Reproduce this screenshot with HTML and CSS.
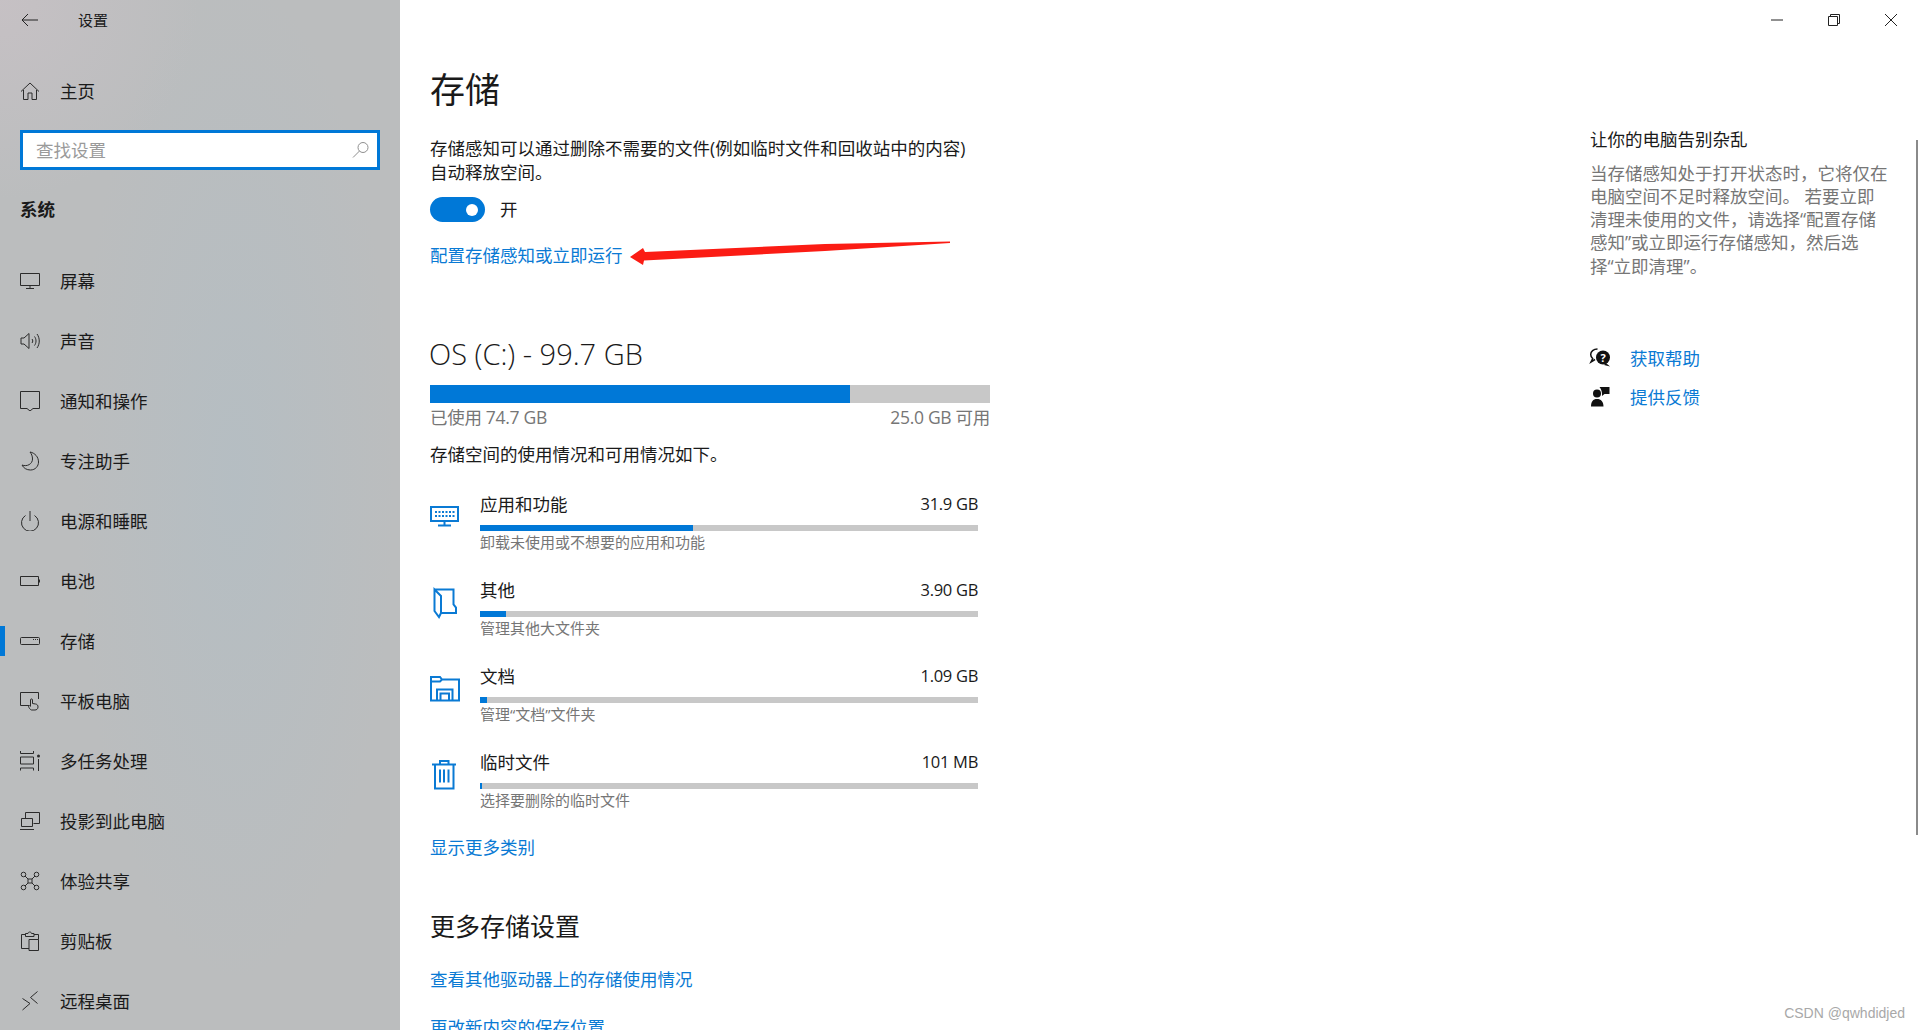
FILE: index.html
```html
<!DOCTYPE html>
<html lang="zh-CN">
<head>
    <meta charset="UTF-8">
    <title>设置 - 存储</title>
    <link rel="stylesheet" href="styles.css">
</head>
<body>
    <!-- Left navigation -->
    <aside class="sidebar">
        <div class="titlebar">
            <svg class="back-icon" viewBox="0 0 18 14"><path d="M7 1 1 7l6 6M1 7h16"/></svg>
            <span class="app-name">设置</span>
        </div>

        <div class="nav-item home-item">
            <svg class="nav-icon" viewBox="0 0 20 20"><path d="M1 10.500 10 2l9 8.500M3.500 9v9.500h4.500v-6.500h4v6.500h4.500V9"/></svg>
            <span>主页</span>
        </div>

        <div class="search-box">
            <span class="search-placeholder">查找设置</span>
            <svg class="search-icon" viewBox="0 0 18 18"><circle cx="11" cy="6.500" r="5"/><path d="M7.500 10 1 16.500"/></svg>
        </div>

        <h3 class="nav-heading">系统</h3>

        <nav class="nav-list">
            <div class="nav-item">
                <svg class="nav-icon" viewBox="0 0 20 20"><path d="M.5 2.500h19v12H.5zM10 14.500v3M6 17.500h8"/></svg>
                <span>屏幕</span>
            </div>
            <div class="nav-item">
                <svg class="nav-icon" viewBox="0 0 20 20"><path d="M1 7v6h3l5 4.500v-15L4 7zM12 8c1 1.200 1 2.800 0 4M14.500 5.500c2 2.700 2 6.300 0 9M17 3c3 4 3 10 0 14"/></svg>
                <span>声音</span>
            </div>
            <div class="nav-item">
                <svg class="nav-icon" viewBox="0 0 20 20"><path d="M.5.500h19v17H13l-3 2.500-3-2.500H.5z"/></svg>
                <span>通知和操作</span>
            </div>
            <div class="nav-item">
                <svg class="nav-icon" viewBox="0 0 20 20"><path d="M10 1c5 1 8.500 5 8.500 10 0 4-3 8-8 8-4 0-7-2-8.500-5 5 2 10.500-1 10.500-6 0-3-1-5-2.500-7z"/></svg>
                <span>专注助手</span>
            </div>
            <div class="nav-item">
                <svg class="nav-icon" viewBox="0 0 20 20"><path d="M5.500 4.500a8.500 8.500 0 1 0 9 0M10 0v10"/></svg>
                <span>电源和睡眠</span>
            </div>
            <div class="nav-item">
                <svg class="nav-icon" viewBox="0 0 20 20"><path d="M.5 5.500h18v9H.5zM19.500 8.500v3"/></svg>
                <span>电池</span>
            </div>
            <div class="nav-item active">
                <svg class="nav-icon" viewBox="0 0 20 20"><rect x=".5" y="6.500" width="19" height="7" rx="1"/><path d="M13 8.500h1M15 8.500h1M17 8.500h1"/></svg>
                <span>存储</span>
            </div>
            <div class="nav-item">
                <svg class="nav-icon" viewBox="0 0 20 20"><path d="M9 14.500H.5V1.500h18V8M11.500 19c-1 0-2.500-2-3-3.500-.3-1 1-1.300 2-.2V9c0-1.500 2-1.500 2 0v3.500l3 .5c2 .3 2.500 1.500 2.500 3 0 2-1.500 3-3 3z"/></svg>
                <span>平板电脑</span>
            </div>
            <div class="nav-item">
                <svg class="nav-icon" viewBox="0 0 20 20"><path d="M.5 0v2.500h13V0M.5 6h13v7H.5zM.5 19.500V17h13v2.500M18.500 8v12"/><circle cx="18.500" cy="5" r="1.500" class="dot"/></svg>
                <span>多任务处理</span>
            </div>
            <div class="nav-item">
                <svg class="nav-icon" viewBox="0 0 20 20"><path d="M5.500 7V1.500h14v11h-6M1.500 7.500h11v8h-11zM0 18.500h14"/></svg>
                <span>投影到此电脑</span>
            </div>
            <div class="nav-item">
                <svg class="nav-icon" viewBox="0 0 20 20"><rect x="8" y="8" width="4" height="4"/><circle cx="3.500" cy="3.500" r="2.300"/><circle cx="16.500" cy="3.500" r="2.300"/><circle cx="3.500" cy="16.500" r="2.300"/><circle cx="16.500" cy="16.500" r="2.300"/><path d="M5 5l3 3M15 5l-3 3M5 15l3-3M15 15l-3-3"/></svg>
                <span>体验共享</span>
            </div>
            <div class="nav-item">
                <svg class="nav-icon" viewBox="0 0 20 20"><path d="M9 17.500H1.500V3.500h4M14 3.500h4.500v5M5.500 5.500V2.500h2.500c0-2 3.500-2 3.500 0H14v3zM9 8.500h9.500v11H9z"/></svg>
                <span>剪贴板</span>
            </div>
            <div class="nav-item">
                <svg class="nav-icon" viewBox="0 0 20 20"><path d="M2.500 7.500 10 12.500 2.500 19M17.500.5 10.500 6.500 17.500 12.500"/></svg>
                <span>远程桌面</span>
            </div>
        </nav>
    </aside>

    <!-- Main settings content -->
    <main class="content">
        <section class="main-col">
            <h1 class="page-title">存储</h1>
            <p class="intro">存储感知可以通过删除不需要的文件(例如临时文件和回收站中的内容)<br>自动释放空间。</p>

            <div class="toggle-row">
                <span class="toggle"><span class="toggle-knob"></span></span>
                <span>开</span>
            </div>

            <a class="link config-link">配置存储感知或立即运行</a>

            <h2 class="drive-title">OS (C:) - 99.7 GB</h2>
            <div class="drive-bar"><div class="drive-fill"></div></div>
            <div class="drive-labels">
                <span>已使用 74.7 GB</span>
                <span>25.0 GB 可用</span>
            </div>
            <p class="usage-note">存储空间的使用情况和可用情况如下。</p>

            <div class="category-list">
                <div class="category">
                    <svg class="category-icon" viewBox="0 0 30 30"><path d="M1 7h27v14H1zM14.500 21v4M8 25.500h13"/><path class="keys" d="M5 12h19.500M5 16h19.500"/></svg>
                    <div class="category-body">
                        <div class="category-head"><span>应用和功能</span><span class="size">31.9 GB</span></div>
                        <div class="category-bar"><div class="category-fill" style="width: 213px"></div></div>
                        <div class="category-sub">卸载未使用或不想要的应用和功能</div>
                    </div>
                </div>
                <div class="category">
                    <svg class="category-icon" viewBox="0 0 30 30"><path d="M4.500 3.500h19v15L26 21.500V27H11M4.500 3.500V25L9 31l2-4V10z"/></svg>
                    <div class="category-body">
                        <div class="category-head"><span>其他</span><span class="size">3.90 GB</span></div>
                        <div class="category-bar"><div class="category-fill" style="width: 26px"></div></div>
                        <div class="category-sub">管理其他大文件夹</div>
                    </div>
                </div>
                <div class="category">
                    <svg class="category-icon" viewBox="0 0 30 30"><path d="M1 28.500V5h9l2 2.500h17v21h-6.500V17.500H7v11zM1 9.500h9l2-2M10.500 28.500v-7H19v7M7 28.500h15.500"/></svg>
                    <div class="category-body">
                        <div class="category-head"><span>文档</span><span class="size">1.09 GB</span></div>
                        <div class="category-bar"><div class="category-fill" style="width: 7px"></div></div>
                        <div class="category-sub">管理“文档”文件夹</div>
                    </div>
                </div>
                <div class="category">
                    <svg class="category-icon" viewBox="0 0 30 30"><path d="M2 6.500h24M10 6V3h8.500v3M5 7v23.500h18.500V7M10 11.500v13M14 11.500v13M18.500 11.500v13"/></svg>
                    <div class="category-body">
                        <div class="category-head"><span>临时文件</span><span class="size">101 MB</span></div>
                        <div class="category-bar"><div class="category-fill" style="width: 2px"></div></div>
                        <div class="category-sub">选择要删除的临时文件</div>
                    </div>
                </div>
            </div>

            <a class="link more-link">显示更多类别</a>

            <h2 class="section-title">更多存储设置</h2>
            <a class="link other-link">查看其他驱动器上的存储使用情况</a>
            <a class="link save-link">更改新内容的保存位置</a>
        </section>

        <!-- Right help column -->
        <section class="side-col">
            <div class="side-title">让你的电脑告别杂乱</div>
            <p class="side-text">当存储感知处于打开状态时，它将仅在<br>电脑空间不足时释放空间。 若要立即<br>清理未使用的文件，请选择“配置存储<br>感知”或立即运行存储感知，然后选<br>择“立即清理”。</p>
            <div class="help-links">
                <div class="help-row">
                    <svg class="help-icon" viewBox="0 0 20 20"><path class="outline" d="M7.500 1C3.500 1 .7 3.500.7 6.500c0 1.800.8 3 2 4L1 14l4-2.500"/><circle class="solid" cx="13" cy="9.500" r="7"/><path class="solid" d="M16 15l4 3.500-6-1.500z"/><text class="help-mark" x="13" y="13.500">?</text></svg>
                    <a class="link">获取帮助</a>
                </div>
                <div class="help-row">
                    <svg class="help-icon" viewBox="0 0 20 20"><circle class="solid" cx="7" cy="6.500" r="4"/><path class="solid" d="M1 19.500c0-5 2-7.500 6-7.500s6.500 2.500 6.500 7.500zM9.500 0H19.500v7h-5L12 9V7c0-3-1-5-2.500-7z"/></svg>
                    <a class="link">提供反馈</a>
                </div>
            </div>
        </section>
    </main>

    <!-- Things lying over the page -->
    <div class="window-controls">
        <span class="win-btn"><svg viewBox="0 0 12 12"><path d="M0 6h12"/></svg></span>
        <span class="win-btn"><svg viewBox="0 0 12 12"><path d="M.5 2.500h9v9h-9zM2.500 2.500v-2h9v9h-2"/></svg></span>
        <span class="win-btn"><svg viewBox="0 0 12 12"><path d="M0 0l12 12M12 0 0 12"/></svg></span>
    </div>
    <svg class="red-arrow" viewBox="0 0 330 30"><path d="M5 19 18 10l2 4 180-8 125-2.500V5L200 13 19 22.500 18 27z"/></svg>
    <div class="scrollbar"></div>
    <div class="watermark">CSDN @qwhdidjed</div>
</body>
</html>
```

FILE: styles.css
```css
/* General page */
* {
    box-sizing: border-box;
}

html, body {
    height: 100%;
}

body {
    display: flex;
    margin: 0;
    overflow: hidden;
    background-color: #fff;
    color: #1a1a1a;
    font-family: "Open Sans", "Noto Sans CJK SC", sans-serif;
    font-size: 17.5px;
    line-height: 24.5px;
}

svg {
    display: block;
    fill: none;
    stroke-width: 1;
}

/* Sidebar */
.sidebar {
    flex: 0 0 400px;
    height: 1030px;
    overflow: hidden;
    background-color: #bbbdbe;
    background-image:
        radial-gradient(ellipse 160px 500px at 235px 480px, rgba(176, 190, 198, 0.55), transparent),
        radial-gradient(ellipse 200px 200px at 0 0, rgba(205, 195, 200, 0.6), transparent);
}

.titlebar {
    display: flex;
    align-items: center;
    height: 40px;
    padding-left: 21px;
}

.back-icon {
    width: 18px;
    height: 14px;
    stroke: #222;
}

.app-name {
    margin-left: 39px;
    font-size: 15px;
}

.nav-item {
    display: flex;
    align-items: center;
    position: relative;
    height: 60px;
    padding-left: 20px;
    gap: 20px;
}

.nav-icon {
    flex: none;
    width: 20px;
    height: 20px;
    stroke: #2b2b2b;
}

.nav-icon .dot {
    fill: #2b2b2b;
    stroke: none;
}

.home-item {
    margin-top: 21px;
}

.active::before {
    content: "";
    position: absolute;
    left: 0;
    top: 15px;
    width: 5px;
    height: 30px;
    background-color: #0078d7;
}

.search-box {
    display: flex;
    align-items: center;
    justify-content: space-between;
    height: 40px;
    margin: 9px 20px 0;
    padding: 0 7px 0 13px;
    border: 3px solid #0078d7;
    background-color: #fff;
}

.search-placeholder {
    color: #9a9a9a;
}

.search-icon {
    width: 18px;
    height: 18px;
    stroke: #8f8f8f;
}

.nav-heading {
    height: 40px;
    margin: 19px 0 0 20px;
    font-size: 17.5px;
    font-weight: 700;
    line-height: 40px;
}

.nav-list {
    margin-top: 22px;
}

/* Main area */
.content {
    display: flex;
    flex: 1;
    height: 1030px;
    overflow: hidden;
}

.main-col {
    flex: 0 0 560px;
    margin-left: 30px;
    padding-top: 65px;
}

.page-title {
    height: 50px;
    margin: 0;
    font-size: 35px;
    font-weight: 400;
    line-height: 50px;
}

.intro {
    margin: 21px 0 0;
    line-height: 24px;
}

.toggle-row {
    display: flex;
    align-items: center;
    height: 25px;
    margin-top: 13px;
    gap: 15px;
}

.toggle {
    display: flex;
    align-items: center;
    justify-content: flex-end;
    width: 55px;
    height: 25px;
    padding-right: 7px;
    border-radius: 13px;
    background-color: #0078d7;
}

.toggle-knob {
    width: 12px;
    height: 12px;
    border-radius: 50%;
    background-color: #fff;
}

.link {
    display: block;
    color: #0a7ad4;
}

.config-link {
    margin-top: 21px;
}

.drive-title {
    height: 40px;
    margin: 66px 0 0 -1px;
    font-size: 29px;
    font-weight: 300;
    line-height: 40px;
}

.drive-bar {
    height: 18px;
    margin-top: 11px;
    background-color: #c8c8c8;
}

.drive-fill {
    width: 420px;
    height: 100%;
    background-color: #0078d7;
}

.drive-labels {
    display: flex;
    justify-content: space-between;
    margin-top: 2px;
    color: #767676;
    letter-spacing: -0.3px;
}

.usage-note {
    margin: 13px 0 0;
}

.category-list {
    display: flex;
    flex-direction: column;
    margin-top: 26px;
    gap: 26px;
}

.category {
    display: flex;
    height: 60px;
}

.category-icon {
    flex: none;
    width: 30px;
    height: 30px;
    margin-top: 7px;
    overflow: visible;
    stroke: #0a7ad4;
    stroke-width: 2;
}

.category-icon .keys {
    stroke-dasharray: 2 1.500;
}

.category-body {
    flex: none;
    width: 498px;
    margin-left: 20px;
}

.category-head {
    display: flex;
    justify-content: space-between;
    height: 24px;
    line-height: 22px;
}

.size {
    font-size: 16.500px;
    letter-spacing: -0.3px;
}

.category-bar {
    height: 6px;
    margin-top: 8px;
    background-color: #c8c8c8;
}

.category-fill {
    height: 100%;
    background-color: #0078d7;
}

.category-sub {
    height: 20px;
    margin-top: 1px;
    color: #767676;
    font-size: 15px;
    line-height: 20px;
}

.more-link {
    margin-top: 24px;
}

.section-title {
    height: 40px;
    margin: 47px 0 0;
    font-size: 25px;
    font-weight: 400;
    line-height: 40px;
}

.other-link {
    margin-top: 21px;
}

.save-link {
    margin-top: 23px;
}

/* Right column */
.side-col {
    flex: 0 0 320px;
    margin-left: 600px;
    padding-top: 127px;
}

.side-text {
    margin: 10px 0 0;
    color: #767676;
    line-height: 23.300px;
}

.help-links {
    margin-top: 68px;
}

.help-row {
    display: flex;
    align-items: center;
    height: 24px;
    margin-bottom: 15px;
    gap: 20px;
}

.help-icon {
    flex: none;
    width: 20px;
    height: 20px;
    overflow: visible;
}

.help-icon .outline {
    stroke: #111;
    stroke-width: 1.500;
}

.help-icon .solid {
    fill: #111;
}

.help-mark {
    fill: #fff;
    font-size: 11px;
    font-weight: 700;
    text-anchor: middle;
}

/* Overlays */
.window-controls {
    position: absolute;
    top: 0;
    right: 1px;
    display: flex;
}

.win-btn {
    display: flex;
    align-items: center;
    justify-content: center;
    width: 57px;
    height: 40px;
}

.win-btn svg {
    width: 12px;
    height: 12px;
    stroke: #222;
}

.red-arrow {
    position: absolute;
    left: 625px;
    top: 238px;
    width: 330px;
    height: 30px;
}

.red-arrow path {
    fill: #fb1c14;
}

.scrollbar {
    position: absolute;
    top: 140px;
    right: 2px;
    width: 2px;
    height: 695px;
    background-color: #8a8a8a;
}

.watermark {
    position: absolute;
    top: 1004px;
    right: 15px;
    color: #a8a8a8;
    font-family: "Liberation Sans", sans-serif;
    font-size: 14px;
    line-height: 18px;
}
```
